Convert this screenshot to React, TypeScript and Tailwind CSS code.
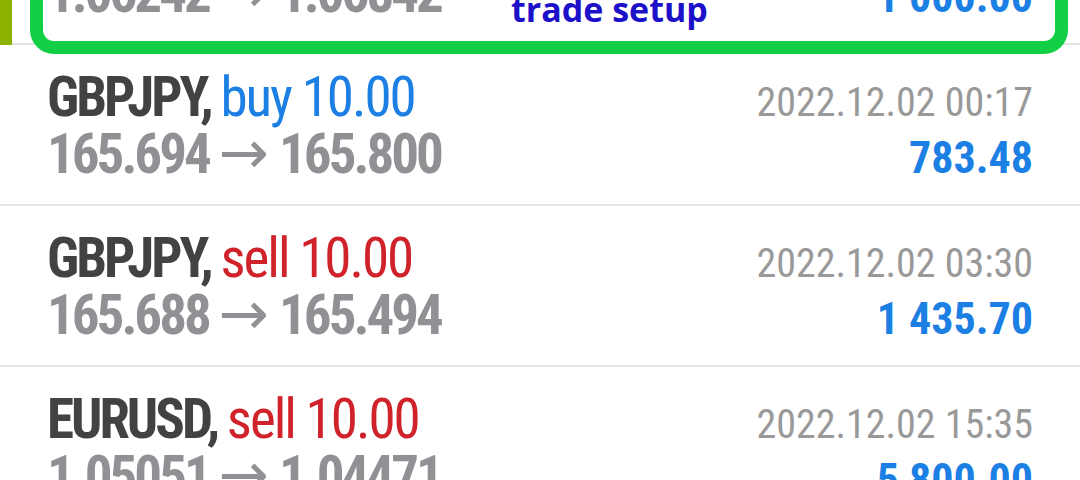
import React from "react";

type Trade = {
  symbol: string;
  side: "buy" | "sell";
  volume: string;
  open: string;
  close: string;
  time: string;
  profit: string;
};

const trades: Trade[] = [
  { symbol: "EURUSD", side: "buy", volume: "10.00", open: "1.06242", close: "1.06842", time: "2022.12.01 17:05", profit: "1 000.00" },
  { symbol: "GBPJPY", side: "buy", volume: "10.00", open: "165.694", close: "165.800", time: "2022.12.02 00:17", profit: "783.48" },
  { symbol: "GBPJPY", side: "sell", volume: "10.00", open: "165.688", close: "165.494", time: "2022.12.02 03:30", profit: "1 435.70" },
  { symbol: "EURUSD", side: "sell", volume: "10.00", open: "1.05051", close: "1.04471", time: "2022.12.02 15:35", profit: "5 800.00" },
];

function Row({ t, first }: { t: Trade; first?: boolean }) {
  return (
    <div className={first ? "relative -mt-[116px]" : "relative"}>
      {first && <div className="absolute left-0 top-0 bottom-0 w-[12px] bg-[#8cb300]" />}
      <div className="h-[159px] px-[47px] pt-[25px]">
        <div className="flex items-baseline justify-between h-[55px] leading-[55px]">
          <div className="text-[55px] font-bold text-[#424242] tracking-[-3px]">
            {t.symbol},{" "}
            <span className={t.side === "buy" ? "font-normal text-[#1b7fe3] tracking-[-2px]" : "font-normal text-[#d0222a] tracking-[-2px]"}>
              {t.side} {t.volume}
            </span>
          </div>
          <div className="text-[40px] text-[#999999] leading-[40px]">{t.time}</div>
        </div>
        <div className="flex items-baseline justify-between h-[55px] leading-[55px]">
          <div className="text-[55px] font-bold text-[#909194] tracking-[-3px]">
            {t.open}
            <span className="font-normal text-[60px] tracking-normal mx-[10px] [font-family:'DejaVu_Sans',sans-serif]">→</span>
            {t.close}
          </div>
          <div className="text-[44px] font-bold text-[#1b7fe3] leading-[44px]">{t.profit}</div>
        </div>
      </div>
      <div className="h-[2px] bg-[#e4e4e4]" />
    </div>
  );
}

export default function App() {
  return (
    <div className="relative w-[1080px] h-[480px] overflow-hidden bg-white [font-family:'Roboto_Condensed',Roboto,sans-serif]">
      {trades.map((t, i) => (
        <Row key={i} t={t} first={i === 0} />
      ))}
      <div className="absolute left-[30px] right-[12px] top-[-120px] h-[174px] rounded-[24px] border-[13px] border-[#13cf45]" />
      <div className="absolute left-[511px] top-[-8px] text-[34px] leading-[34px] font-bold text-[#1c10c8] [font-family:'Open_Sans',sans-serif]">
        trade setup
      </div>
    </div>
  );
}
